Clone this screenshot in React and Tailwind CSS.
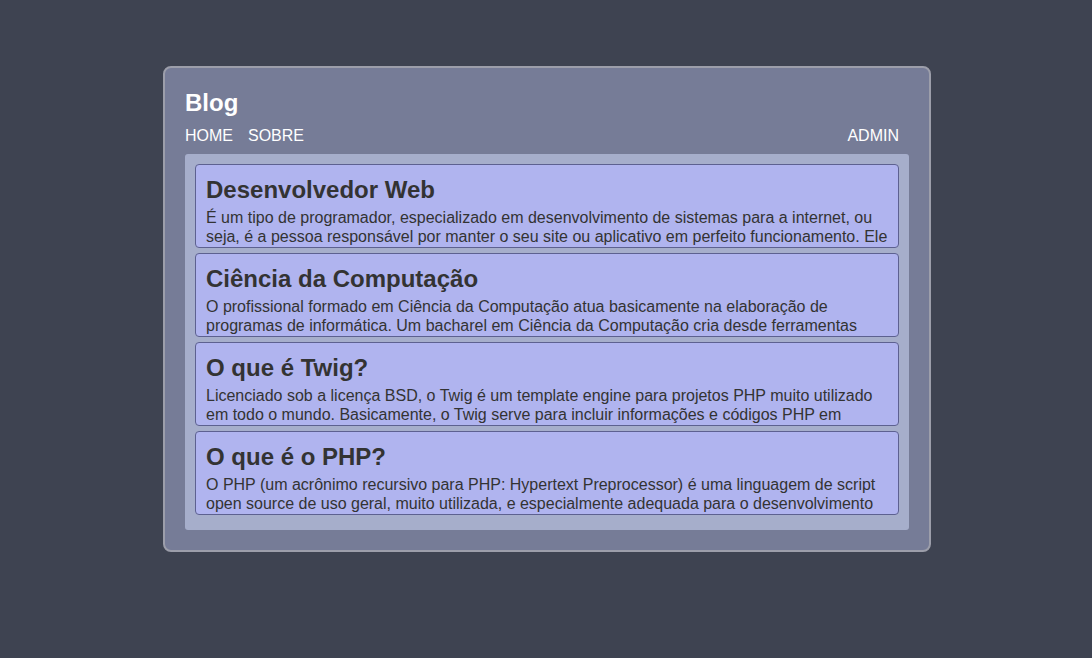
export default function App() {
  const posts = [
    {
      title: "Desenvolvedor Web",
      body: "É um tipo de programador, especializado em desenvolvimento de sistemas para a internet, ou seja, é a pessoa responsável por manter o seu site ou aplicativo em perfeito funcionamento. Ele também cria novas funcionalidades e corrige problemas.",
    },
    {
      title: "Ciência da Computação",
      body: "O profissional formado em Ciência da Computação atua basicamente na elaboração de programas de informática. Um bacharel em Ciência da Computação cria desde ferramentas simples até sistemas complexos.",
    },
    {
      title: "O que é Twig?",
      body: "Licenciado sob a licença BSD, o Twig é um template engine para projetos PHP muito utilizado em todo o mundo. Basicamente, o Twig serve para incluir informações e códigos PHP em arquivos HTML de forma simples.",
    },
    {
      title: "O que é o PHP?",
      body: "O PHP (um acrônimo recursivo para PHP: Hypertext Preprocessor) é uma linguagem de script open source de uso geral, muito utilizada, e especialmente adequada para o desenvolvimento web e que pode ser embutida dentro do HTML.",
    },
  ];
  return (
    <div
      className="min-h-[658px] w-full bg-[#3e4351] pt-[66px]"
      style={{ fontFamily: '"Liberation Sans", Arial, sans-serif' }}
    >
      <div className="ml-[163px] w-[768px] rounded-[8px] border-2 border-[#9c9eaa] bg-[#767c97] px-5 pt-[21px] pb-[20px]">
        <h1 className="text-[24px] leading-[27.6px] font-bold text-white">Blog</h1>
        <nav className="mt-[10px] flex pr-[10px] text-[16px] leading-[18.4px] text-white">
          <a className="mr-[15px]">HOME</a>
          <a>SOBRE</a>
          <a className="ml-auto">ADMIN</a>
        </nav>
        <div className="mt-[9px] rounded-[3px] bg-[#a6aecb] px-[10px] pt-[10px] pb-[10px]">
          {posts.map((p) => (
            <div
              key={p.title}
              className="mb-[5px] h-[84px] overflow-hidden rounded-[4px] border border-[#5d6190] bg-[#b0b4ef] px-[10px] pt-[11px] text-[#333333]"
            >
              <h2 className="text-[24px] leading-[27.6px] font-bold">{p.title}</h2>
              <p className="mt-[4px] text-[16px] leading-[19px]">{p.body}</p>
            </div>
          ))}
        </div>
      </div>
    </div>
  );
}
